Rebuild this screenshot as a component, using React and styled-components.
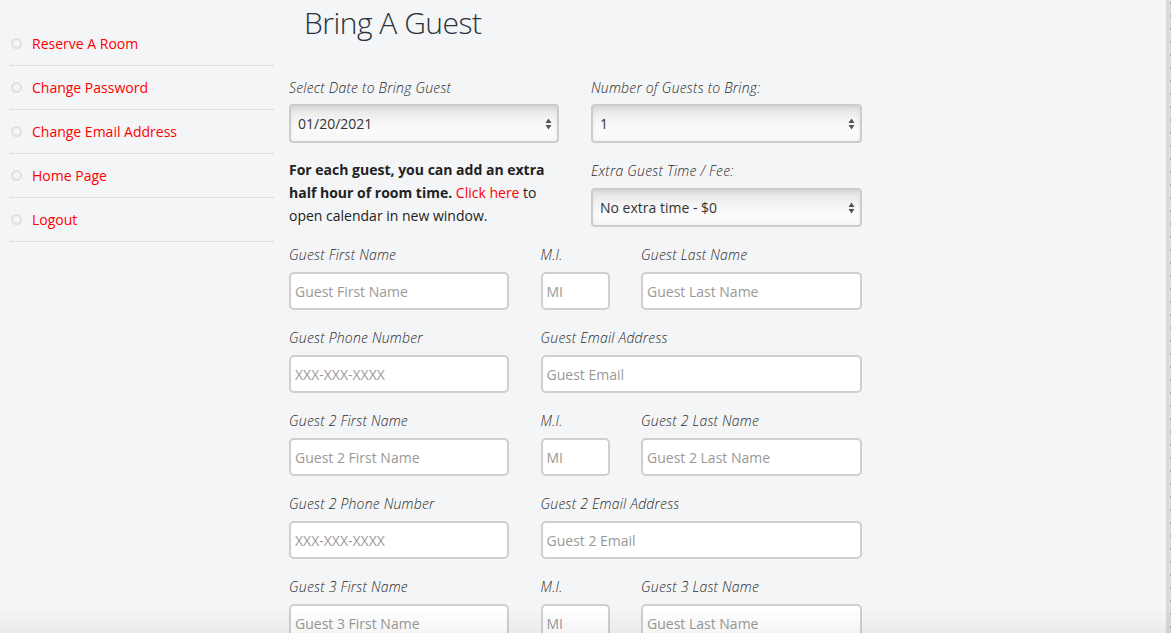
import styled, { createGlobalStyle } from "styled-components";

const GlobalStyle = createGlobalStyle`
  * { box-sizing: border-box; }
  body {
    margin: 0;
    background: #f4f5f7;
    font-family: "Open Sans", "Liberation Sans", sans-serif;
    color: #2a2a2a;
  }
`;

const menu = ["Reserve A Room", "Change Password", "Change Email Address", "Home Page", "Logout"];

const guests = [
  { n: "", first: "Guest First Name", last: "Guest Last Name", email: "Guest Email" },
  { n: " 2", first: "Guest 2 First Name", last: "Guest 2 Last Name", email: "Guest 2 Email" },
  { n: " 3", first: "Guest 3 First Name", last: "Guest Last Name", email: "Guest 3 Email" },
];

function Arrows() {
  return (
    <ArrowBox>
      <svg width="7" height="12" viewBox="0 0 7 12">
        <path d="M3.5 0.5 L6.5 5 L0.5 5 Z" fill="#555" />
        <path d="M3.5 11.5 L6.5 7 L0.5 7 Z" fill="#555" />
      </svg>
    </ArrowBox>
  );
}

function Dropdown({ value }) {
  return (
    <SelectWrap>
      <Select defaultValue={value}>
        <option>{value}</option>
      </Select>
      <Arrows />
    </SelectWrap>
  );
}

export default function App() {
  return (
    <>
      <GlobalStyle />
      <Page>
        <Sidebar>
          {menu.map((m) => (
            <MenuItem key={m}>
              <Ring />
              <MenuLink href="#">{m}</MenuLink>
            </MenuItem>
          ))}
        </Sidebar>
        <Main>
          <Title>Bring A Guest</Title>
          <TopGrid>
            <Field>
              <Label>Select Date to Bring Guest</Label>
              <Dropdown value="01/20/2021" />
            </Field>
            <Field>
              <Label>Number of Guests to Bring:</Label>
              <Dropdown value="1" />
            </Field>
            <Note>
              <b>For each guest, you can add an extra half hour of room time.</b>{" "}
              <RedLink href="#">Click here</RedLink> to open calendar in new window.
            </Note>
            <Field $top={3}>
              <Label $gap={7}>Extra Guest Time / Fee:</Label>
              <Dropdown value="No extra time - $0" />
            </Field>
          </TopGrid>
          <GuestGrid>
            {guests.map((g) => (
              <GuestBlock key={g.n}>
                <Field>
                  <Label $gap={7}>Guest{g.n} First Name</Label>
                  <Input placeholder={g.first} />
                </Field>
                <Field>
                  <Label $gap={7}>M.I.</Label>
                  <Input placeholder="MI" />
                </Field>
                <Field>
                  <Label $gap={7}>Guest{g.n} Last Name</Label>
                  <Input placeholder={g.last} />
                </Field>
                <Field>
                  <Label $gap={7}>Guest{g.n} Phone Number</Label>
                  <Input placeholder="XXX-XXX-XXXX" />
                </Field>
                <Field $span={2}>
                  <Label $gap={7}>Guest{g.n} Email Address</Label>
                  <Input placeholder={g.email} />
                </Field>
              </GuestBlock>
            ))}
          </GuestGrid>
        </Main>
        <EdgeStrip />
      </Page>
      <BottomFade />
    </>
  );
}

const Page = styled.div`
  display: flex;
  min-height: 100vh;
  padding-left: 10px;
`;

const Sidebar = styled.ul`
  width: 263px;
  flex-shrink: 0;
  list-style: none;
  margin: 22px 0 0;
  padding: 0;
`;

const MenuItem = styled.li`
  height: 44px;
  display: flex;
  align-items: center;
  border-bottom: 1px dotted #c4c4c4;
`;

const Ring = styled.span`
  width: 11px;
  height: 11px;
  border: 2px solid #e0e0e0;
  border-radius: 50%;
  margin: 0 10px 0 1px;
`;

const MenuLink = styled.a`
  color: #ff0000;
  text-decoration: none;
  font-size: 14px;
  line-height: 20px;
`;

const Main = styled.div`
  flex: 1;
  margin-left: 16px;
  padding-top: 3px;
`;

const Title = styled.h1`
  margin: 0 0 35px 15px;
  font-weight: 300;
  font-size: 30px;
  line-height: 40px;
  color: #2b323d;
  letter-spacing: -0.5px;
`;

const TopGrid = styled.div`
  display: grid;
  grid-template-columns: 270px 271px;
  column-gap: 32px;
  row-gap: 15px;
`;

const GuestGrid = styled.div`
  margin-top: 18px;
  display: flex;
  flex-direction: column;
  gap: 18px;
`;

const GuestBlock = styled.div`
  display: grid;
  grid-template-columns: 220px 69px 221px;
  column-gap: 31.5px;
  row-gap: 18px;
`;

const Field = styled.div`
  display: flex;
  flex-direction: column;
  padding-top: ${(p) => p.$top || 0}px;
  grid-column: span ${(p) => p.$span || 1};
`;

const Label = styled.label`
  font-style: italic;
  font-weight: 300;
  font-size: 14px;
  line-height: 20px;
  letter-spacing: 0.2px;
  color: #2a2a2a;
  margin-bottom: ${(p) => p.$gap || 6}px;
`;

const SelectWrap = styled.div`
  position: relative;
`;

const Select = styled.select`
  appearance: none;
  width: 100%;
  height: 39px;
  border: 2px solid #cdcdcd;
  border-radius: 4px;
  padding: 0 7px;
  font-family: "Open Sans", "Liberation Sans", sans-serif;
  font-size: 14px;
  color: #333;
  background: linear-gradient(to bottom, #e2e2e2 0%, #f2f2f2 35%, #fbfbfb 70%, #f6f6f6 100%);
  box-shadow: inset 0 2px 4px rgba(0, 0, 0, 0.06);
  outline: none;
`;

const ArrowBox = styled.span`
  position: absolute;
  right: 7px;
  top: 14px;
  line-height: 0;
  pointer-events: none;
`;

const Input = styled.input`
  width: 100%;
  height: 38px;
  border: 2px solid #cfcfcf;
  border-radius: 5px;
  background: #fff;
  padding: 0 4px;
  font-family: "Open Sans", "Liberation Sans", sans-serif;
  font-size: 14px;
  color: #333;
  outline: none;
  &::placeholder {
    color: #999;
  }
`;

const Note = styled.p`
  margin: 0;
  font-size: 14px;
  line-height: 23px;
  color: #222;
  b {
    font-weight: 700;
  }
`;

const RedLink = styled.a`
  color: #ff0000;
  text-decoration: none;
`;

const EdgeStrip = styled.div`
  width: 5px;
  flex-shrink: 0;
  background-color: #dadada;
  background-image: linear-gradient(to bottom, #ababab 2px, transparent 2px);
  background-size: 1px 13px;
  background-repeat: repeat-y;
  background-position: right 0 top 2px;
`;

const BottomFade = styled.div`
  position: fixed;
  left: 0;
  right: 0;
  bottom: 0;
  height: 24px;
  background: linear-gradient(to bottom, rgba(0, 0, 0, 0), rgba(0, 0, 0, 0.04));
  pointer-events: none;
`;
